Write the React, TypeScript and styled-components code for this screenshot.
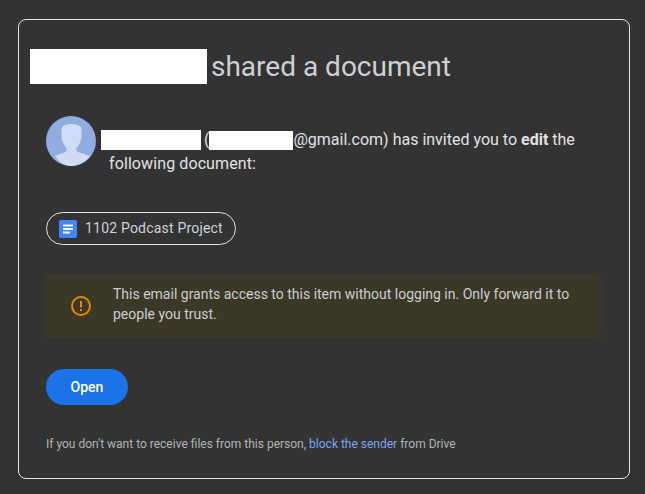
import * as React from 'react';
import styled, { createGlobalStyle } from 'styled-components';

const GlobalStyle = createGlobalStyle`
  html, body {
    margin: 0;
    padding: 0;
    background: #333333;
  }
  body {
    font-family: Roboto, "Liberation Sans", Arial, sans-serif;
  }
`;

export default function App() {
  return (
    <Page>
      <GlobalStyle />
      <Card>
        <Title>
          <TitleRedaction />
          <TitleText>shared a document</TitleText>
        </Title>
        <Invite>
          <Avatar />
          <InviteText>
            <InviteLine>
              <NameRedaction />
              <Paren>(</Paren>
              <EmailRedaction />
              @gmail.com) has invited you to <strong>edit</strong> the
            </InviteLine>
            <InviteLine $indent>following document:</InviteLine>
          </InviteText>
        </Invite>
        <DocChip>
          <DocsIcon />
          <ChipLabel>1102 Podcast Project</ChipLabel>
        </DocChip>
        <Notice>
          <NoticeIcon />
          <NoticeText>
            This email grants access to this item without logging in. Only forward it to people you trust.
          </NoticeText>
        </Notice>
        <OpenButton>Open</OpenButton>
        <Footer>
          If you don't want to receive files from this person, <FooterLink>block the sender</FooterLink> from Drive
        </Footer>
      </Card>
    </Page>
  );
}

function Avatar() {
  return (
    <AvatarSvg viewBox="0 0 50 50">
      <circle cx="25" cy="25" r="25" fill="#8fade0" />
      <path
        d="M9 40 L19 36 C20.500 35.200 21 34 20.500 32 C17 28 15.500 24 15.500 20 L15.500 14 C15.500 10 19 8 25.500 8 C32 8 35.500 10 35.500 14 L35.500 20 C35.500 24 34 28 30.500 32 C30 34 30.500 35.200 32 36 L44 40 C39.500 46.500 32 50 25 50 C18.500 50 12.500 46 9 40 Z"
        fill="#cfdcf3"
      />
    </AvatarSvg>
  );
}

function DocsIcon() {
  return (
    <IconSvg width="18" height="18" viewBox="0 0 18 18">
      <rect width="18" height="18" rx="2" fill="#4285f4" />
      <rect x="4" y="4.500" width="10" height="2" fill="#f1f5fd" />
      <rect x="4" y="8" width="10" height="2" fill="#f1f5fd" />
      <rect x="4" y="11.500" width="7" height="2" fill="#f1f5fd" />
    </IconSvg>
  );
}

function NoticeIcon() {
  return (
    <IconSvg width="20" height="20" viewBox="0 0 20 20">
      <circle cx="10" cy="10" r="9" fill="none" stroke="#ea8600" strokeWidth="2" />
      <rect x="9" y="5" width="2" height="6.500" fill="#ea8600" />
      <rect x="9" y="13" width="2" height="2" fill="#ea8600" />
    </IconSvg>
  );
}

const IconSvg = styled.svg`
  flex: none;
`;

const Page = styled.div`
  box-sizing: border-box;
  width: 645px;
  height: 494px;
  padding: 19px 15px 0 18px;
  overflow: hidden;
`;

const Card = styled.div`
  box-sizing: border-box;
  width: 612px;
  height: 460px;
  padding: 29px 28px 0 27px;
  border: 1px solid #e3e3e3;
  border-radius: 8px;
  display: flex;
  flex-direction: column;
  align-items: flex-start;
`;

const Title = styled.div`
  display: flex;
  align-items: center;
  gap: 4px;
  height: 35px;
  margin-left: -16px;
`;

const TitleRedaction = styled.div`
  width: 177px;
  height: 35px;
  background: #ffffff;
`;

const TitleText = styled.span`
  font-size: 28px;
  line-height: 35px;
  color: #cdd1d6;
`;

const Invite = styled.div`
  display: flex;
  margin-top: 32px;
  height: 50px;
`;

const AvatarSvg = styled.svg`
  width: 50px;
  height: 50px;
  flex: none;
`;

const InviteText = styled.div`
  margin-left: 5px;
  padding-top: 12px;
  font-size: 16px;
  line-height: 24px;
  color: #e0e2e5;
  white-space: nowrap;

  strong {
    font-weight: 700;
  }
`;

const InviteLine = styled.div<{ $indent?: boolean }>`
  display: flex;
  align-items: center;
  white-space: pre-wrap;
  height: 24px;
  padding-left: ${(p) => (p.$indent ? '8px' : '0')};
  letter-spacing: ${(p) => (p.$indent ? '0.1px' : '0')};
`;

const NameRedaction = styled.span`
  width: 100px;
  height: 20px;
  background: #ffffff;
`;

const Paren = styled.span`
  margin-left: 3px;
`;

const EmailRedaction = styled.span`
  width: 84px;
  height: 19px;
  background: #ffffff;
`;

const DocChip = styled.div`
  box-sizing: border-box;
  display: flex;
  align-items: center;
  gap: 8px;
  width: 190px;
  height: 33px;
  margin-top: 46px;
  padding-left: 12px;
  border: 1px solid #e3e3e3;
  border-radius: 17px;
  white-space: nowrap;
`;

const ChipLabel = styled.span`
  padding-bottom: 2px;
  font-size: 14px;
  letter-spacing: 0.2px;
  color: #cfd2d6;
`;

const Notice = styled.div`
  box-sizing: border-box;
  display: flex;
  align-items: center;
  width: 555px;
  height: 64px;
  margin-top: 29px;
  padding: 0 25px;
  border-radius: 4px;
  background: #3c3827;
`;

const NoticeText = styled.div`
  margin-left: 22px;
  padding-bottom: 4px;
  font-size: 14px;
  line-height: 20px;
  color: #cbcdd0;
`;

const OpenButton = styled.div`
  display: flex;
  align-items: center;
  justify-content: center;
  width: 82px;
  height: 36px;
  margin-top: 31px;
  border-radius: 18px;
  background: #1a73e8;
  color: #ffffff;
  font-size: 14px;
  font-weight: 500;
`;

const Footer = styled.div`
  margin-top: 31px;
  font-size: 12px;
  line-height: 16px;
  color: #b0b3b7;
  white-space: nowrap;
`;

const FooterLink = styled.span`
  color: #7aa7f0;
`;
